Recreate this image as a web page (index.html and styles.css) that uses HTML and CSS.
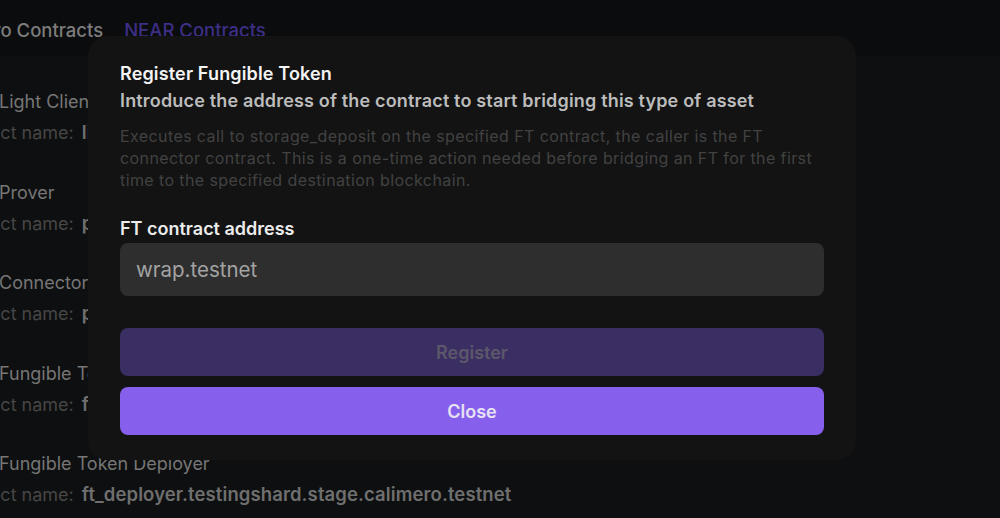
FILE: index.html
```html
<!DOCTYPE html>
<html lang="en">
<head>
<meta charset="utf-8">
<title>Register Fungible Token</title>
<link rel="stylesheet" href="styles.css">
</head>
<body>
<div class="page">
  <header class="tabs">
    <span class="tab">Calimero Contracts</span>
    <span class="tab active">NEAR Contracts</span>
  </header>
  <main class="list">
    <div class="item">
      <div class="item-title">Light Client</div>
      <div class="item-row"><span class="label">Contract name:</span> <span class="value">light_client.testingshard.stage.calimero.testnet</span></div>
    </div>
    <div class="item">
      <div class="item-title">Prover</div>
      <div class="item-row"><span class="label">Contract name:</span> <span class="value">prover.testingshard.stage.calimero.testnet</span></div>
    </div>
    <div class="item">
      <div class="item-title">Connector</div>
      <div class="item-row"><span class="label">Contract name:</span> <span class="value">permissions.testingshard.stage.calimero.testnet</span></div>
    </div>
    <div class="item">
      <div class="item-title">Fungible Token</div>
      <div class="item-row"><span class="label">Contract name:</span> <span class="value">ft_connector.testingshard.stage.calimero.testnet</span></div>
    </div>
    <div class="item">
      <div class="item-title">Fungible Token Deployer</div>
      <div class="item-row"><span class="label">Contract name:</span> <span class="value">ft_deployer.testingshard.stage.calimero.testnet</span></div>
    </div>
  </main>
</div>

<div class="modal">
  <h2 class="modal-title">Register Fungible Token</h2>
  <p class="modal-subtitle">Introduce the address of the contract to start bridging this type of asset</p>
  <p class="modal-desc">Executes call to storage_deposit on the specified FT contract, the caller is the FT connector contract. This is a one-time action needed before bridging an FT for the first time to the specified destination blockchain.</p>
  <label class="field-label">FT contract address</label>
  <div class="input">wrap.testnet</div>
  <div class="actions">
    <button class="btn btn-disabled">Register</button>
    <button class="btn btn-primary">Close</button>
  </div>
</div>
</body>
</html>
```

FILE: styles.css
```css
* { box-sizing: border-box; }

html, body {
  margin: 0;
  padding: 0;
  width: 1000px;
  height: 518px;
  overflow: hidden;
  background: #0e0f10;
  font-family: Inter, "Noto Sans", sans-serif;
}

.page {
  width: 1000px;
  height: 518px;
}

.tabs {
  height: 56px;
  background: #0b0c0e;
  display: flex;
  gap: 21px;
  padding-top: 18px;
  margin-left: -67px;
  font-size: 18.5px;
  font-weight: 500;
  line-height: 24px;
}

.tab { color: #7c7c7c; }
.tab.active { color: #3d2f85; }

.list {
  display: flex;
  flex-direction: column;
  gap: 35.5px;
  padding-top: 34px;
}

.item {
  display: flex;
  flex-direction: column;
  gap: 6px;
}

.item-title {
  font-size: 18px;
  line-height: 24px;
  color: #767676;
  margin-left: -1px;
  white-space: nowrap;
}

.item-row {
  font-size: 18px;
  line-height: 24px;
  white-space: nowrap;
}

.label {
  color: #464646;
  margin-left: -57px;
}

.value {
  margin-left: 3px;
  color: #6f6f6f;
  font-weight: 600;
  font-size: 18.5px;
  letter-spacing: 0.1px;
}

.modal {
  position: absolute;
  left: 88px;
  top: 36px;
  width: 768px;
  height: 424px;
  border-radius: 20px;
  background: #131313;
  padding: 28px 32px 25px;
  display: flex;
  flex-direction: column;
}

.modal-title {
  margin: 0;
  font-size: 18px;
  line-height: 20px;
  font-weight: 600;
  letter-spacing: 0.15px;
  color: #f4f4f4;
}

.modal-subtitle {
  margin: 5px 0 0;
  font-size: 18px;
  line-height: 24px;
  font-weight: 600;
  letter-spacing: 0.17px;
  color: #bcbcbc;
}

.modal-desc {
  margin: 12px 0 0;
  font-size: 16px;
  line-height: 22px;
  letter-spacing: 0.4px;
  color: #424242;
}

.field-label {
  margin-top: 26px;
  font-size: 18px;
  line-height: 24px;
  font-weight: 600;
  color: #ececec;
}

.input {
  margin-top: 2px;
  height: 53px;
  border-radius: 8px;
  background: #2e2e2e;
  color: #a3a3a3;
  font-size: 20.5px;
  padding: 0 16px;
  display: flex;
  align-items: center;
}

.actions {
  margin-top: 32px;
  display: flex;
  flex-direction: column;
  gap: 11px;
}

.btn {
  height: 48px;
  border: 0;
  border-radius: 8px;
  font-family: inherit;
  font-size: 18px;
  font-weight: 600;
}

.btn-disabled {
  background: #3b2e62;
  color: #5c586a;
}

.btn-primary {
  background: #8660ec;
  color: #e6e2f4;
}
```
